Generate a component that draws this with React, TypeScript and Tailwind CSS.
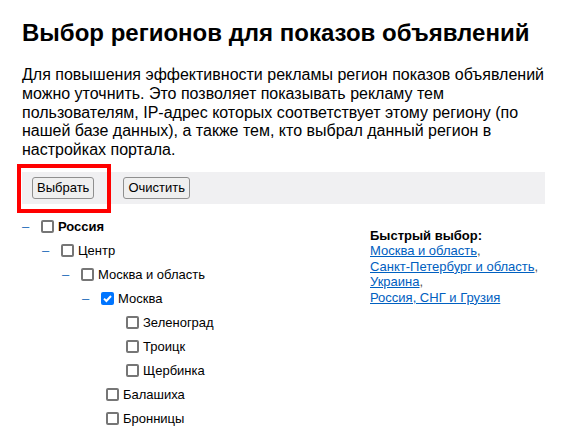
import React from 'react'

type Node = { label: string; level: number; leaf?: boolean; checked?: boolean; bold?: boolean }

const nodes: Node[] = [
  { label: 'Россия', level: 0, bold: true },
  { label: 'Центр', level: 1 },
  { label: 'Москва и область', level: 2 },
  { label: 'Москва', level: 3, checked: true },
  { label: 'Зеленоград', level: 4, leaf: true },
  { label: 'Троицк', level: 4, leaf: true },
  { label: 'Щербинка', level: 4, leaf: true },
  { label: 'Балашиха', level: 3, leaf: true },
  { label: 'Бронницы', level: 3, leaf: true },
]

const indent = ['w-0', 'w-[20px]', 'w-[40px]', 'w-[60px]', 'w-[80px]']

const quick = ['Москва и область', 'Санкт-Петербург и область', 'Украина', 'Россия, СНГ и Грузия']

function Checkbox({ checked }: { checked?: boolean }) {
  if (checked) {
    return (
      <span className="flex h-[13px] w-[13px] items-center justify-center rounded-[2px] bg-[#0075ff]">
        <svg width="11" height="11" viewBox="0 0 11 11">
          <path d="M2 5.6 L4.4 8 L9 3" fill="none" stroke="white" strokeWidth="2" />
        </svg>
      </span>
    )
  }
  return <span className="block h-[13px] w-[13px] rounded-[2px] border-2 border-[#767676] bg-white" />
}

export default function App() {
  return (
    <div className="relative min-h-[434px] bg-white pl-[22px] pr-[35px] font-['Liberation_Sans',Arial,sans-serif] text-black">
      <h1 className="whitespace-nowrap pt-[18px] text-[24px] font-bold leading-[30px]">Выбор регионов для показов объявлений</h1>

      <p className="mt-[18px] text-[16px] leading-[18.75px]">
        Для повышения эффективности рекламы регион показов объявлений можно уточнить. Это позволяет показывать рекламу тем
        пользователям, IP-адрес которых соответствует этому региону (по нашей базе данных), а также тем, кто выбрал данный
        регион в настройках портала.
      </p>

      <div className="mt-[12px] flex h-[32px] items-center gap-[29px] bg-[#f0f0f2] pl-[10px]">
        <button className="h-[22px] rounded-[3px] border border-[#8f8f8f] bg-[#efefef] px-[4px] text-[13px]">Выбрать</button>
        <button className="h-[22px] rounded-[3px] border border-[#8f8f8f] bg-[#efefef] px-[4px] text-[13px]">Очистить</button>
      </div>

      <div className="absolute left-[17px] top-[164px] h-[49px] w-[94px] border-4 border-[#ff0000]" />

      <div className="mt-[11px] flex">
        <div className="w-[348px] text-[13px]">
          {nodes.map((n, i) => (
            <div key={i} className="flex h-[24px] items-center">
              <span className={indent[n.level]} />
              {n.leaf ? (
                <span className="w-[24px]" />
              ) : (
                <span className="w-[19px] text-[13px] text-[#2a6ebb]">–</span>
              )}
              <Checkbox checked={n.checked} />
              <span className={n.bold ? 'ml-[4px] font-bold' : 'ml-[4px]'}>{n.label}</span>
            </div>
          ))}
        </div>
        <div className="mt-[13px] text-[13px] leading-[15.5px]">
          <div className="font-bold">Быстрый выбор:</div>
          {quick.map((q, i) => (
            <div key={q}>
              <a href="#" className="text-[#0060c0] underline">
                {q}
              </a>
              {i < quick.length - 1 && <span className="text-[#555]">,</span>}
            </div>
          ))}
        </div>
      </div>
    </div>
  )
}
